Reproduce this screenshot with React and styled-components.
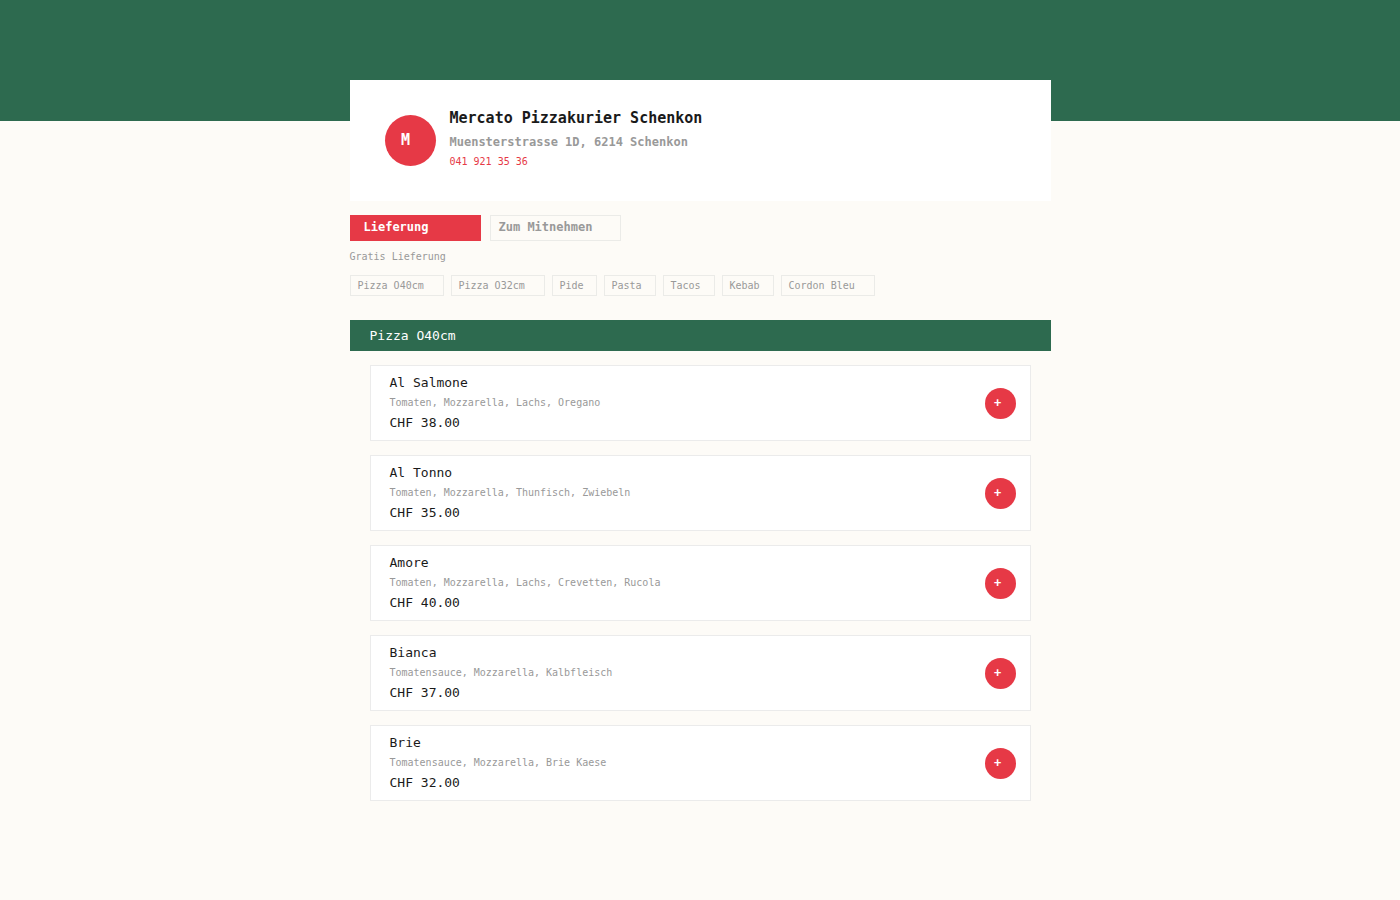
import { useState } from 'react'
import styled, { createGlobalStyle, css } from 'styled-components'

const categories = ['Pizza O40cm', 'Pizza O32cm', 'Pide', 'Pasta', 'Tacos', 'Kebab', 'Cordon Bleu']

const pizzas = [
    { id: 1, name: 'Al Salmone', ingredients: 'Tomaten, Mozzarella, Lachs, Oregano', price: 'CHF 38.00' },
    { id: 2, name: 'Al Tonno', ingredients: 'Tomaten, Mozzarella, Thunfisch, Zwiebeln', price: 'CHF 35.00' },
    { id: 3, name: 'Amore', ingredients: 'Tomaten, Mozzarella, Lachs, Crevetten, Rucola', price: 'CHF 40.00' },
    { id: 4, name: 'Bianca', ingredients: 'Tomatensauce, Mozzarella, Kalbfleisch', price: 'CHF 37.00' },
    { id: 5, name: 'Brie', ingredients: 'Tomatensauce, Mozzarella, Brie Kaese', price: 'CHF 32.00' },
]

function App() {
    const [mode, setMode] = useState('delivery')
    const [cart, setCart] = useState([])

    const addToCart = (pizza) => {
        setCart([...cart, pizza.id])
    }

    return (
        <>
            <GlobalStyle />
            <Banner />
            <Page>
                <RestaurantCard>
                    <Logo>M</Logo>
                    <RestaurantInfo>
                        <h1>Mercato Pizzakurier Schenkon</h1>
                        <p>Muensterstrasse 1D, 6214 Schenkon</p>
                        <a href="tel:0419213536">041 921 35 36</a>
                    </RestaurantInfo>
                </RestaurantCard>

                <Modes>
                    <ModeButton
                    $active={mode === 'delivery'}
                    onClick={() => setMode('delivery')}>Lieferung</ModeButton>
                    <ModeButton
                    $active={mode === 'takeaway'}
                    onClick={() => setMode('takeaway')}>Zum Mitnehmen</ModeButton>
                </Modes>
                <DeliveryNote>Gratis Lieferung</DeliveryNote>

                <Categories>
                    {categories.map((category) => (
                        <CategoryLink key={category} href="#menu" $chars={category.length}>
                            {category}
                        </CategoryLink>
                    ))}
                </Categories>

                <section id="menu">
                    <SectionTitle>Pizza O40cm</SectionTitle>
                    <MenuList>
                        {pizzas.map((pizza) => (
                            <MenuItem key={pizza.id}>
                                <div>
                                    <ItemName>{pizza.name}</ItemName>
                                    <Ingredients>{pizza.ingredients}</Ingredients>
                                    <Price>{pizza.price}</Price>
                                </div>
                                <AddButton aria-label={`${pizza.name} +`} onClick={() => addToCart(pizza)}>+</AddButton>
                            </MenuItem>
                        ))}
                    </MenuList>
                </section>
            </Page>
        </>
    )
}

const GlobalStyle = createGlobalStyle`
    * {
        box-sizing: border-box;
        margin: 0;
        padding: 0;
    }

    body {
        background: #fdfbf7;
        color: #1a1a1a;
        font-family: "DejaVu Sans Mono", monospace;
    }

    button {
        font-family: inherit;
        cursor: pointer;
    }

    a {
        text-decoration: none;
    }
`

const Banner = styled.div`
    height: 121px;
    background: #2d6a4f;
`

const Page = styled.main`
    width: 100%;
    max-width: 701px;
    margin: -41px auto 0;
    padding-bottom: 40px;
`

const RestaurantCard = styled.header`
    display: flex;
    align-items: center;
    gap: 14px;
    padding: 24px 35px 25px;
    background: white;
`

const Logo = styled.div`
    display: flex;
    align-items: center;
    justify-content: center;
    width: 51px;
    height: 51px;
    padding-right: 9px;
    border-radius: 50%;
    background: #e63946;
    color: white;
    font-size: 15px;
    font-weight: 700;
`

const RestaurantInfo = styled.div`
    display: flex;
    flex-direction: column;
    padding-bottom: 4px;

    h1 {
        font-size: 15px;
        line-height: 28px;
    }

    p {
        color: #999;
        font-size: 12px;
        font-weight: 700;
        line-height: 20px;
    }

    a {
        color: #e63946;
        font-size: 10px;
        line-height: 20px;
    }
`

const Modes = styled.div`
    display: flex;
    gap: 9px;
    margin-top: 14px;
`

const ModeButton = styled.button`
    width: 131px;
    height: 26px;
    padding: 0 8px 2px;
    border: 1px solid #ebebe8;
    background: transparent;
    color: #999;
    font-size: 12px;
    font-weight: 700;
    text-align: left;

    ${({ $active }) => $active && css`
        padding-left: 13px;
        border-color: #e63946;
        background: #e63946;
        color: white;
    `}
`

const DeliveryNote = styled.p`
    margin-top: 6px;
    color: #999;
    font-size: 10px;
    line-height: 20px;
`

const Categories = styled.nav`
    display: flex;
    flex-wrap: wrap;
    gap: 7px;
    margin: 8px 0 24px;
`

const CategoryLink = styled.a`
    width: ${({ $chars }) => $chars * 7 + 17}px;
    padding-left: 7px;
    border: 1px solid #ebebe8;
    color: #999;
    font-size: 10px;
    line-height: 19px;
`

const SectionTitle = styled.h2`
    padding: 0 20px;
    background: #2d6a4f;
    color: white;
    font-size: 13px;
    font-weight: 400;
    line-height: 31px;
`

const MenuList = styled.ul`
    display: flex;
    flex-direction: column;
    gap: 14px;
    padding: 14px 20px;
    list-style: none;
`

const MenuItem = styled.li`
    display: flex;
    align-items: center;
    justify-content: space-between;
    padding: 7px 14px 7px 19px;
    border: 1px solid #ebebeb;
    background: white;
`

const ItemName = styled.h3`
    font-size: 13px;
    font-weight: 400;
    line-height: 20px;
`

const Ingredients = styled.p`
    color: #999;
    font-size: 10px;
    line-height: 20px;
`

const Price = styled.p`
    font-size: 13px;
    line-height: 20px;
`

const AddButton = styled.button`
    width: 31px;
    height: 31px;
    padding-right: 5px;
    border: none;
    border-radius: 50%;
    background: #e63946;
    color: white;
    font-size: 12px;
    font-weight: 700;
`

export default App
